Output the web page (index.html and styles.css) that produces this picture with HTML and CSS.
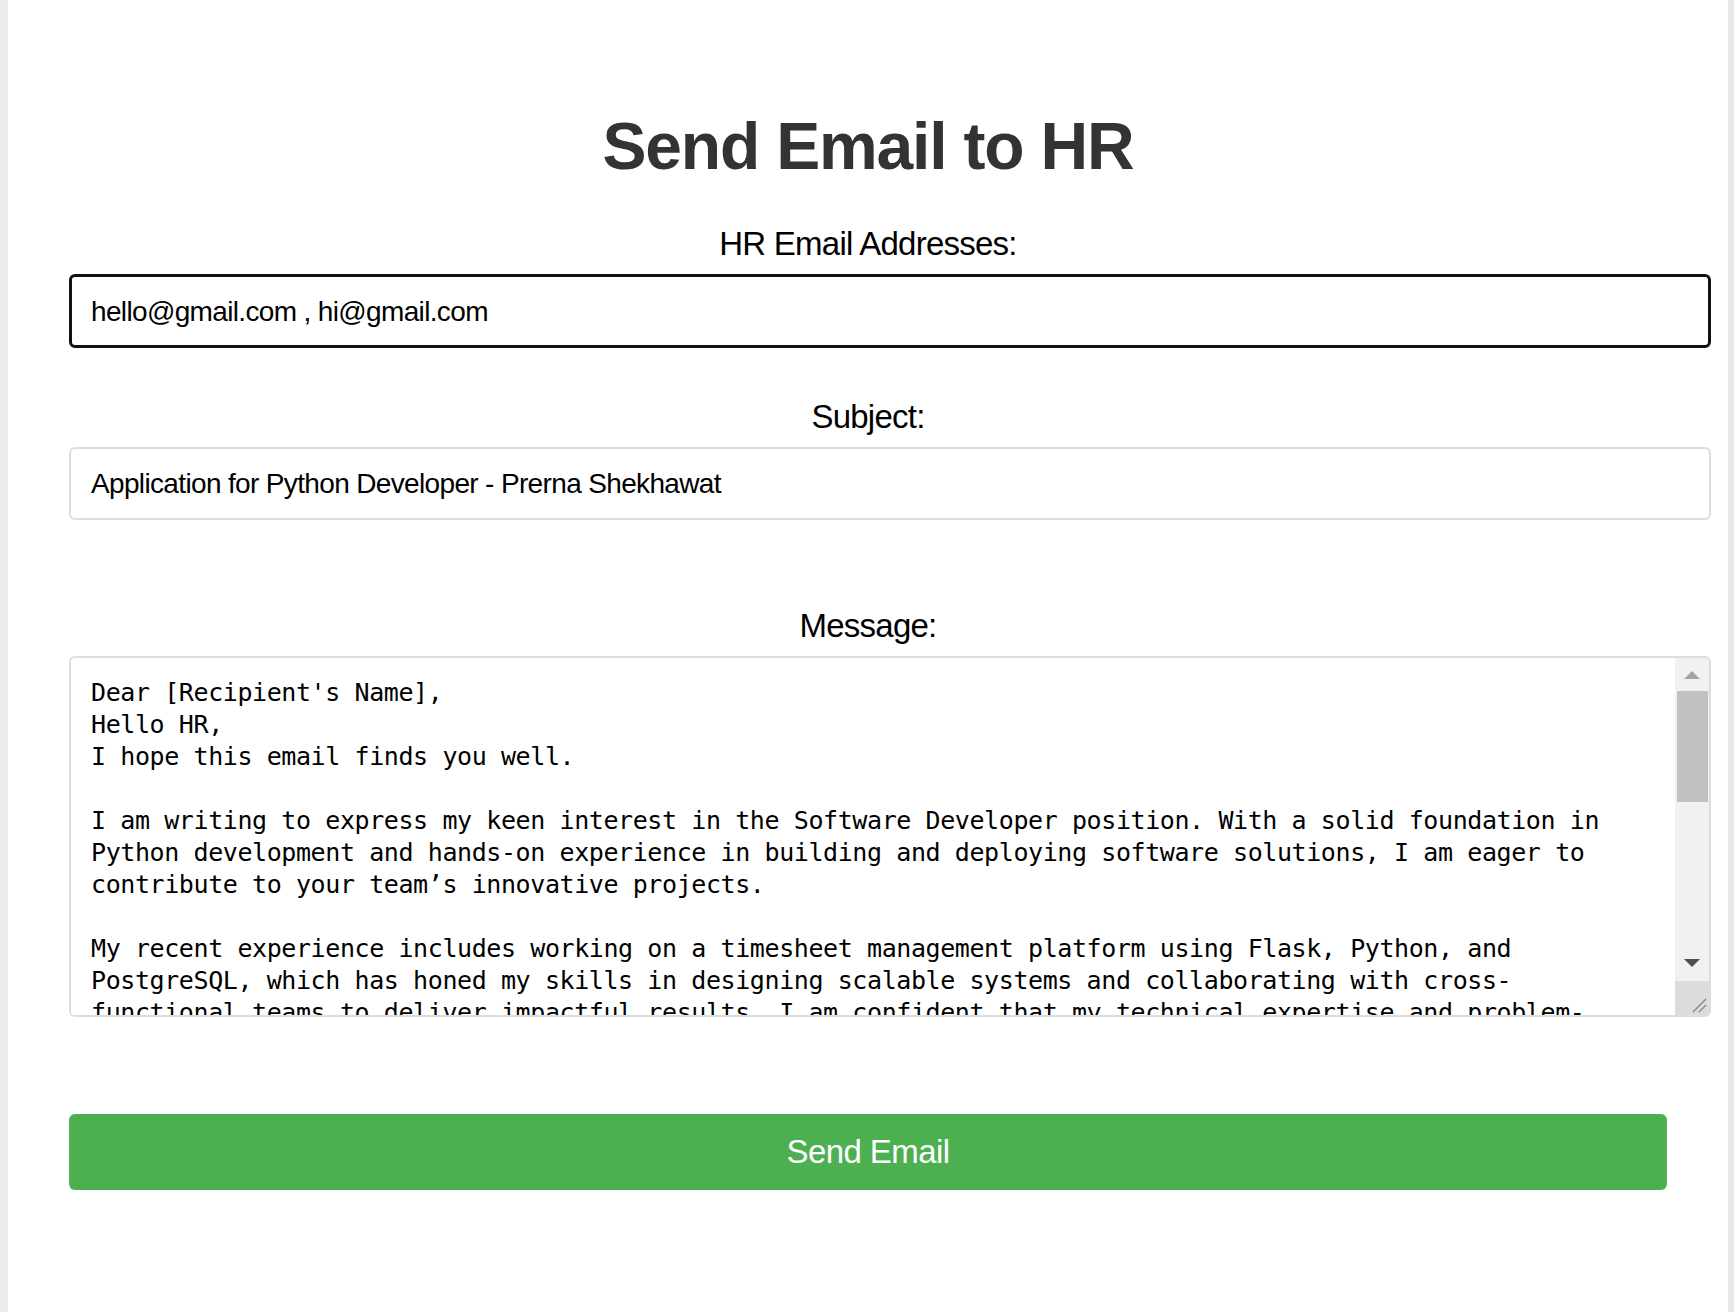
FILE: index.html
```html
<!DOCTYPE html>
<html lang="en">
<head>
<meta charset="utf-8">
<title>Send Email to HR</title>
<link rel="stylesheet" href="styles.css">
</head>
<body>
<div class="page">
  <div class="edge edge-left"></div>
  <main class="main">
    <form class="form">
      <h1 class="title">Send Email to HR</h1>

      <label class="label" for="hr-emails">HR Email Addresses:</label>
      <input class="field field-active field-gap" id="hr-emails" type="text" value="hello@gmail.com , hi@gmail.com">

      <label class="label" for="subject">Subject:</label>
      <input class="field field-gap-lg" id="subject" type="text" value="Application for Python Developer - Prerna Shekhawat">

      <label class="label" for="message">Message:</label>
      <div class="message-box">
        <textarea class="message" id="message">
Dear [Recipient's Name],
Hello HR,
I hope this email finds you well.

I am writing to express my keen interest in the Software Developer position. With a solid foundation in Python development and hands-on experience in building and deploying software solutions, I am eager to contribute to your team’s innovative projects.

My recent experience includes working on a timesheet management platform using Flask, Python, and PostgreSQL, which has honed my skills in designing scalable systems and collaborating with cross-functional teams to deliver impactful results. I am confident that my technical expertise and problem-solving abilities would make me a valuable addition to your team.

I have attached my resume for your review. I would welcome the opportunity to discuss how my skills and experience align with your needs.

Thank you for your time and consideration. I look forward to hearing from you.

Best regards,
Prerna Shekhawat
[Your Phone Number]
[Your Email Address]
[LinkedIn Profile]</textarea>
        <div class="scrollbar" aria-hidden="true">
          <span class="sb-btn">
            <svg width="16" height="8" viewBox="0 0 16 8"><path d="M8 0L16 8H0z" fill="#a3a3a3"/></svg>
          </span>
          <span class="sb-thumb"></span>
          <span class="sb-track"></span>
          <span class="sb-btn sb-btn-down">
            <svg width="16" height="8" viewBox="0 0 16 8"><path d="M0 0H16L8 8z" fill="#505050"/></svg>
          </span>
          <span class="sb-corner">
            <svg width="34" height="34" viewBox="0 0 34 34"><path d="M31 18L18 31M31 24L24 31" stroke="#858585" stroke-width="1.3" fill="none"/></svg>
          </span>
        </div>
      </div>

      <button class="send" type="button">Send Email</button>
    </form>
  </main>
  <div class="edge edge-right"></div>
</div>
</body>
</html>
```

FILE: styles.css
```css
html, body {
  margin: 0;
  padding: 0;
  background: #ffffff;
}

body {
  font-family: "Liberation Sans", Arial, sans-serif;
  color: #000;
}

.page {
  display: flex;
  min-height: 100vh;
}

.edge {
  flex: 0 0 auto;
}

.edge-left {
  width: 8px;
  background: #ebebeb;
}

.edge-right {
  width: 6px;
  background: #e7e7e7;
}

.main {
  flex: 1 1 auto;
  min-width: 0;
  background: #ffffff;
}

.form {
  padding: 108px 61px 0 61px;
}

.title {
  margin: 0;
  font-size: 66px;
  line-height: 76px;
  letter-spacing: -1.2px;
  font-weight: 700;
  color: #333333;
  text-align: center;
}

.label {
  display: block;
  margin: 0 0 10px 0;
  font-size: 33px;
  line-height: 40px;
  letter-spacing: -0.75px;
  text-align: center;
  color: #000;
}

.title + .label {
  margin-top: 40px;
}

.field {
  display: block;
  box-sizing: content-box;
  width: 100%;
  margin: 0;
  padding: 19px 20px;
  border: 2px solid #dddddd;
  border-radius: 6px;
  background: #ffffff;
  color: #000;
  font-family: "Liberation Sans", Arial, sans-serif;
  font-size: 28px;
  line-height: 31px;
  letter-spacing: -0.65px;
  outline: none;
}

.field-active {
  border: 3px solid #111111;
  padding: 18.5px 19px;
}

.field-gap {
  margin-bottom: 49px;
}

.field-gap-lg {
  margin-bottom: 86px;
}

.message-box {
  display: flex;
  box-sizing: content-box;
  width: calc(100% + 40px);
  margin-bottom: 97px;
  border: 2px solid #dddddd;
  border-radius: 6px;
  overflow: hidden;
  background: #ffffff;
}

.message {
  flex: 1 1 auto;
  min-width: 0;
  box-sizing: content-box;
  height: 319px;
  margin: 0;
  padding: 19px 24px 19px 20px;
  border: 0;
  background: #ffffff;
  color: #000;
  font-family: "DejaVu Sans Mono", "Liberation Mono", monospace;
  font-size: 25px;
  line-height: 32px;
  letter-spacing: -0.41px;
  white-space: pre-wrap;
  overflow: hidden;
  resize: none;
  outline: none;
}

.scrollbar {
  flex: 0 0 34px;
  display: flex;
  flex-direction: column;
  background: #f1f1f1;
}

.sb-btn {
  flex: 0 0 33px;
  display: flex;
  align-items: center;
  justify-content: center;
}

.sb-btn-down {
  padding-bottom: 4px;
  box-sizing: border-box;
}

.sb-thumb {
  flex: 0 0 111px;
  margin: 0 1px 0 2px;
  background: #c1c1c1;
}

.sb-track {
  flex: 1 1 auto;
}

.sb-corner {
  flex: 0 0 34px;
  display: block;
  background: #dcdcdc;
}

.sb-corner svg {
  display: block;
}

.send {
  display: block;
  width: 100%;
  margin: 0;
  padding: 18px 0;
  border: 0;
  border-radius: 6px;
  background: #4caf50;
  color: #ffffff;
  font-family: "Liberation Sans", Arial, sans-serif;
  font-size: 33px;
  line-height: 40px;
  letter-spacing: -0.6px;
  text-align: center;
  cursor: pointer;
}
```
